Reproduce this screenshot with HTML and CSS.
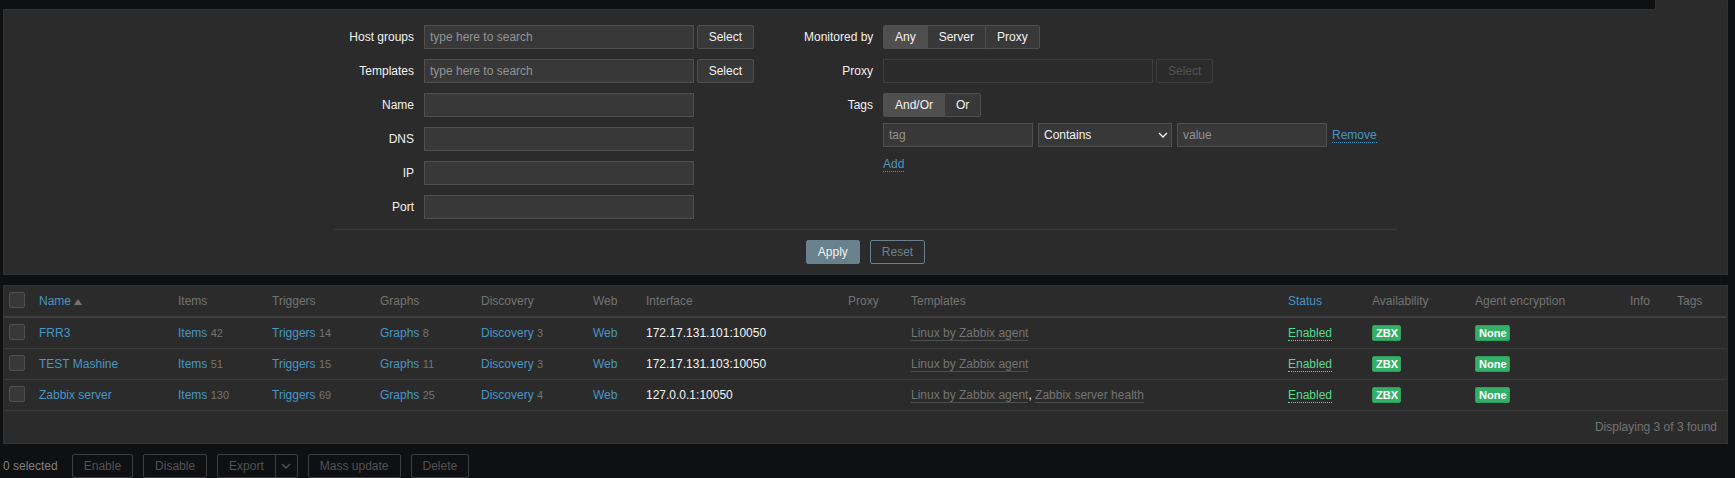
FILE: index.html
```html
<!DOCTYPE html>
<html lang="en">
<head>
<meta charset="utf-8">
<title>Hosts</title>
<link rel="stylesheet" href="styles.css">
</head>
<body>
<main class="page">
  <div class="tab-bar"><div class="tab"></div></div>
  <form class="filter">
    <div class="filter-columns">
      <div class="fields fields-left">
        <label for="groups">Host groups</label>
        <div class="field"><input class="text wide" id="groups" type="text" placeholder="type here to search"><button class="btn" type="button">Select</button></div>
        <label for="templates">Templates</label>
        <div class="field"><input class="text wide" id="templates" type="text" placeholder="type here to search"><button class="btn" type="button">Select</button></div>
        <label for="name">Name</label>
        <div class="field"><input class="text wide" id="name" type="text"></div>
        <label for="dns">DNS</label>
        <div class="field"><input class="text wide" id="dns" type="text"></div>
        <label for="ip">IP</label>
        <div class="field"><input class="text wide" id="ip" type="text"></div>
        <label for="port">Port</label>
        <div class="field"><input class="text wide" id="port" type="text"></div>
      </div>
      <div class="fields fields-right">
        <span class="caption" id="monitored-caption">Monitored by</span>
        <div class="segment" role="radiogroup" aria-labelledby="monitored-caption">
          <input type="radio" name="monitored" id="m-any" checked><label for="m-any">Any</label>
          <input type="radio" name="monitored" id="m-server"><label for="m-server">Server</label>
          <input type="radio" name="monitored" id="m-proxy"><label for="m-proxy">Proxy</label>
        </div>
        <label for="proxy">Proxy</label>
        <div class="field"><input class="text wide" id="proxy" type="text" disabled><button class="btn" type="button" disabled>Select</button></div>
        <span class="caption" id="tags-caption">Tags</span>
        <div class="segment" role="radiogroup" aria-labelledby="tags-caption">
          <input type="radio" name="evaltype" id="t-andor" checked><label for="t-andor">And/Or</label>
          <input type="radio" name="evaltype" id="t-or"><label for="t-or">Or</label>
        </div>
        <div class="tag-editor">
          <div class="tag-row">
            <input class="text tag" type="text" placeholder="tag" aria-label="Tag">
            <div class="select">
              <select aria-label="Operator"><option>Contains</option><option>Equals</option></select>
              <svg class="chevron" viewBox="0 0 10 6" aria-hidden="true"><path d="M1 1l4 4 4-4"/></svg>
            </div>
            <input class="text tag" type="text" placeholder="value" aria-label="Value">
            <a class="action" href="#">Remove</a>
          </div>
          <div class="tag-add"><a class="action" href="#">Add</a></div>
        </div>
      </div>
    </div>
    <div class="filter-buttons">
      <button class="btn btn-apply" type="submit">Apply</button>
      <button class="btn btn-reset" type="reset">Reset</button>
    </div>
  </form>

  <section class="list">
    <table class="hosts">
      <colgroup>
        <col class="c-check"><col class="c-name"><col class="c-items"><col class="c-triggers"><col class="c-graphs"><col class="c-discovery"><col class="c-web"><col class="c-interface"><col class="c-proxy"><col class="c-templates"><col class="c-status"><col class="c-avail"><col class="c-encryption"><col class="c-info"><col class="c-tags">
      </colgroup>
      <thead>
        <tr>
          <th class="tick"><input class="check" type="checkbox" aria-label="Select all"></th>
          <th><a href="#">Name<span class="sort"></span></a></th>
          <th>Items</th><th>Triggers</th><th>Graphs</th><th>Discovery</th><th>Web</th><th>Interface</th><th>Proxy</th><th>Templates</th>
          <th><a href="#">Status</a></th>
          <th>Availability</th><th>Agent encryption</th><th>Info</th><th>Tags</th>
        </tr>
      </thead>
      <tbody>
        <tr>
          <td class="tick"><input class="check" type="checkbox" aria-label="Select FRR3"></td>
          <td><a href="#">FRR3</a></td>
          <td><a href="#">Items</a> <small>42</small></td>
          <td><a href="#">Triggers</a> <small>14</small></td>
          <td><a href="#">Graphs</a> <small>8</small></td>
          <td><a href="#">Discovery</a> <small>3</small></td>
          <td><a href="#">Web</a></td>
          <td>172.17.131.101:10050</td>
          <td></td>
          <td><a class="template" href="#">Linux by Zabbix agent</a></td>
          <td><a class="enabled" href="#">Enabled</a></td>
          <td><span class="badge">ZBX</span></td>
          <td><span class="badge">None</span></td>
          <td></td><td></td>
        </tr>
        <tr>
          <td class="tick"><input class="check" type="checkbox" aria-label="Select TEST Mashine"></td>
          <td><a href="#">TEST Mashine</a></td>
          <td><a href="#">Items</a> <small>51</small></td>
          <td><a href="#">Triggers</a> <small>15</small></td>
          <td><a href="#">Graphs</a> <small>11</small></td>
          <td><a href="#">Discovery</a> <small>3</small></td>
          <td><a href="#">Web</a></td>
          <td>172.17.131.103:10050</td>
          <td></td>
          <td><a class="template" href="#">Linux by Zabbix agent</a></td>
          <td><a class="enabled" href="#">Enabled</a></td>
          <td><span class="badge">ZBX</span></td>
          <td><span class="badge">None</span></td>
          <td></td><td></td>
        </tr>
        <tr>
          <td class="tick"><input class="check" type="checkbox" aria-label="Select Zabbix server"></td>
          <td><a href="#">Zabbix server</a></td>
          <td><a href="#">Items</a> <small>130</small></td>
          <td><a href="#">Triggers</a> <small>69</small></td>
          <td><a href="#">Graphs</a> <small>25</small></td>
          <td><a href="#">Discovery</a> <small>4</small></td>
          <td><a href="#">Web</a></td>
          <td>127.0.0.1:10050</td>
          <td></td>
          <td><a class="template" href="#">Linux by Zabbix agent</a>, <a class="template" href="#">Zabbix server health</a></td>
          <td><a class="enabled" href="#">Enabled</a></td>
          <td><span class="badge">ZBX</span></td>
          <td><span class="badge">None</span></td>
          <td></td><td></td>
        </tr>
      </tbody>
    </table>
    <div class="found">Displaying 3 of 3 found</div>
  </section>

  <div class="actions">
    <span class="selected">0 selected</span>
    <button class="btn" type="button" disabled>Enable</button>
    <button class="btn" type="button" disabled>Disable</button>
    <div class="split">
      <button class="btn" type="button" disabled>Export</button>
      <button class="btn btn-more" type="button" aria-label="Export formats" disabled><svg class="chevron" viewBox="0 0 10 6" aria-hidden="true"><path d="M1 1l4 4 4-4"/></svg></button>
    </div>
    <button class="btn" type="button" disabled>Mass update</button>
    <button class="btn" type="button" disabled>Delete</button>
  </div>
</main>
</body>
</html>
```
FILE: styles.css
```css
* {
  box-sizing: border-box;
}

body {
  margin: 0;
  background: #0e1012;
  color: #f2f2f2;
  font: 12px/14px "Liberation Sans", Arial, sans-serif;
}

a {
  color: #4796c4;
  text-decoration: none;
}

.page {
  padding: 0 7px 0 3px;
}

.tab-bar {
  display: flex;
  justify-content: flex-end;
  height: 9px;
}

.tab {
  width: 73px;
  height: 10px;
  background: #2b2b2b;
  border: solid #303030;
  border-width: 0 1px;
  z-index: 1;
}

.filter {
  padding: 15px 10px 10px;
  background: #2b2b2b;
  border: 1px solid #303132;
}

.filter-columns {
  display: flex;
  gap: 50px;
  max-width: 1063px;
  margin: 0 auto;
  padding-bottom: 10px;
  border-bottom: 1px solid #383838;
}

.fields {
  display: grid;
  gap: 10px;
  align-content: start;
  grid-auto-rows: minmax(24px, auto);
}

.fields-left {
  grid-template-columns: 80px 330px;
}

.fields-right {
  grid-template-columns: 69px 1fr;
}

.fields > label,
.caption {
  text-align: right;
  line-height: 24px;
  white-space: nowrap;
}

.field {
  display: flex;
  gap: 3px;
}

.text,
.select select {
  height: 24px;
  margin: 0;
  padding: 0 5px;
  background: #383838;
  border: 1px solid #4f4f4f;
  border-radius: 0;
  color: #f2f2f2;
  font: inherit;
}

.text::placeholder {
  color: #939393;
  opacity: 1;
}

.text:disabled {
  background: transparent;
  border-color: #3d3d3d;
}

.wide {
  width: 270px;
}

.tag {
  width: 150px;
}

.btn {
  height: 24px;
  margin: 0;
  padding: 0 11px;
  background: #383838;
  border: 1px solid #4f4f4f;
  border-radius: 2px;
  color: #f2f2f2;
  font: inherit;
  white-space: nowrap;
}

.btn:disabled {
  background: transparent;
  border-color: #3d3d3d;
  color: #525252;
}

.segment {
  display: flex;
}

.segment input {
  position: absolute;
  opacity: 0;
  pointer-events: none;
}

.segment label {
  height: 24px;
  padding: 0 11px;
  background: #383838;
  border: 1px solid #4f4f4f;
  line-height: 22px;
}

.segment label + input + label {
  margin-left: -1px;
}

.segment label:first-of-type {
  border-radius: 2px 0 0 2px;
}

.segment label:last-of-type {
  border-radius: 0 2px 2px 0;
}

.segment input:checked + label {
  background: #4f4f4f;
}

.tag-editor {
  grid-column: 2;
  margin-top: -4px;
}

.tag-row {
  display: flex;
  align-items: center;
  gap: 5px;
}

.tag-add {
  padding-top: 10px;
}

.action {
  border-bottom: 1px dotted #4796c4;
}

.select {
  display: flex;
  align-items: center;
  position: relative;
}

.select select {
  appearance: none;
  width: 134px;
}

.chevron {
  width: 10px;
  height: 6px;
  fill: none;
  stroke: currentColor;
  stroke-width: 1.4;
}

.select .chevron {
  position: absolute;
  right: 4px;
  pointer-events: none;
}

.filter-buttons {
  display: flex;
  justify-content: center;
  gap: 10px;
  padding-top: 10px;
}

.btn-apply {
  background: #69808d;
  border-color: #69808d;
}

.btn-reset {
  background: transparent;
  border-color: #69808d;
  color: #69808d;
}

.list {
  margin-top: 10px;
  background: #2b2b2b;
  border: 1px solid #303132;
}

.hosts {
  width: 100%;
  table-layout: fixed;
  border-collapse: separate;
  border-spacing: 0;
}

.c-check { width: 30px; }
.c-name { width: 139px; }
.c-items { width: 94px; }
.c-triggers { width: 108px; }
.c-graphs { width: 101px; }
.c-discovery { width: 112px; }
.c-web { width: 53px; }
.c-interface { width: 202px; }
.c-proxy { width: 63px; }
.c-status { width: 84px; }
.c-avail { width: 103px; }
.c-encryption { width: 155px; }
.c-info { width: 47px; }
.c-tags { width: 55px; }

.hosts th,
.hosts td {
  padding: 0 5px;
  text-align: left;
  vertical-align: middle;
  white-space: nowrap;
}

.hosts th {
  height: 32px;
  border-bottom: 2px solid #3d3d3d;
  color: #737373;
  font-weight: normal;
}

.hosts td {
  height: 31px;
  border-bottom: 1px solid #383838;
}

.hosts .tick {
  padding-bottom: 2px;
}

.hosts small {
  color: #737373;
  font-size: 11px;
}

.sort {
  display: inline-block;
  margin-left: 3px;
  border: solid transparent;
  border-width: 0 4px 6px;
  border-bottom-color: #737373;
}

.check {
  appearance: none;
  display: block;
  width: 16px;
  height: 16px;
  margin: 0;
  background: #383838;
  border: 1px solid #4f4f4f;
  border-radius: 2px;
}

.template {
  border-bottom: 1px solid #4a4f51;
  color: #737373;
}

.enabled {
  border-bottom: 1px dotted #59db8f;
  color: #59db8f;
}

.badge {
  display: inline-block;
  padding: 0 2px 0 3px;
  background: #34af67;
  border: 1px solid #2f9f5e;
  border-radius: 2px;
  color: #fff;
  font-size: 11px;
  font-weight: bold;
  vertical-align: middle;
}

.found {
  padding: 9px 10px;
  color: #737373;
  text-align: right;
}

.actions {
  display: flex;
  align-items: center;
  gap: 10px;
  margin-top: 10px;
}

.selected {
  margin-right: 4px;
  color: #808080;
}

.split {
  display: flex;
}

.split .btn {
  border-radius: 2px 0 0 2px;
}

.split .btn-more {
  width: 23px;
  margin-left: -1px;
  padding: 0 5px;
  border-radius: 0 2px 2px 0;
}

.btn-more .chevron {
  display: block;
}
```
